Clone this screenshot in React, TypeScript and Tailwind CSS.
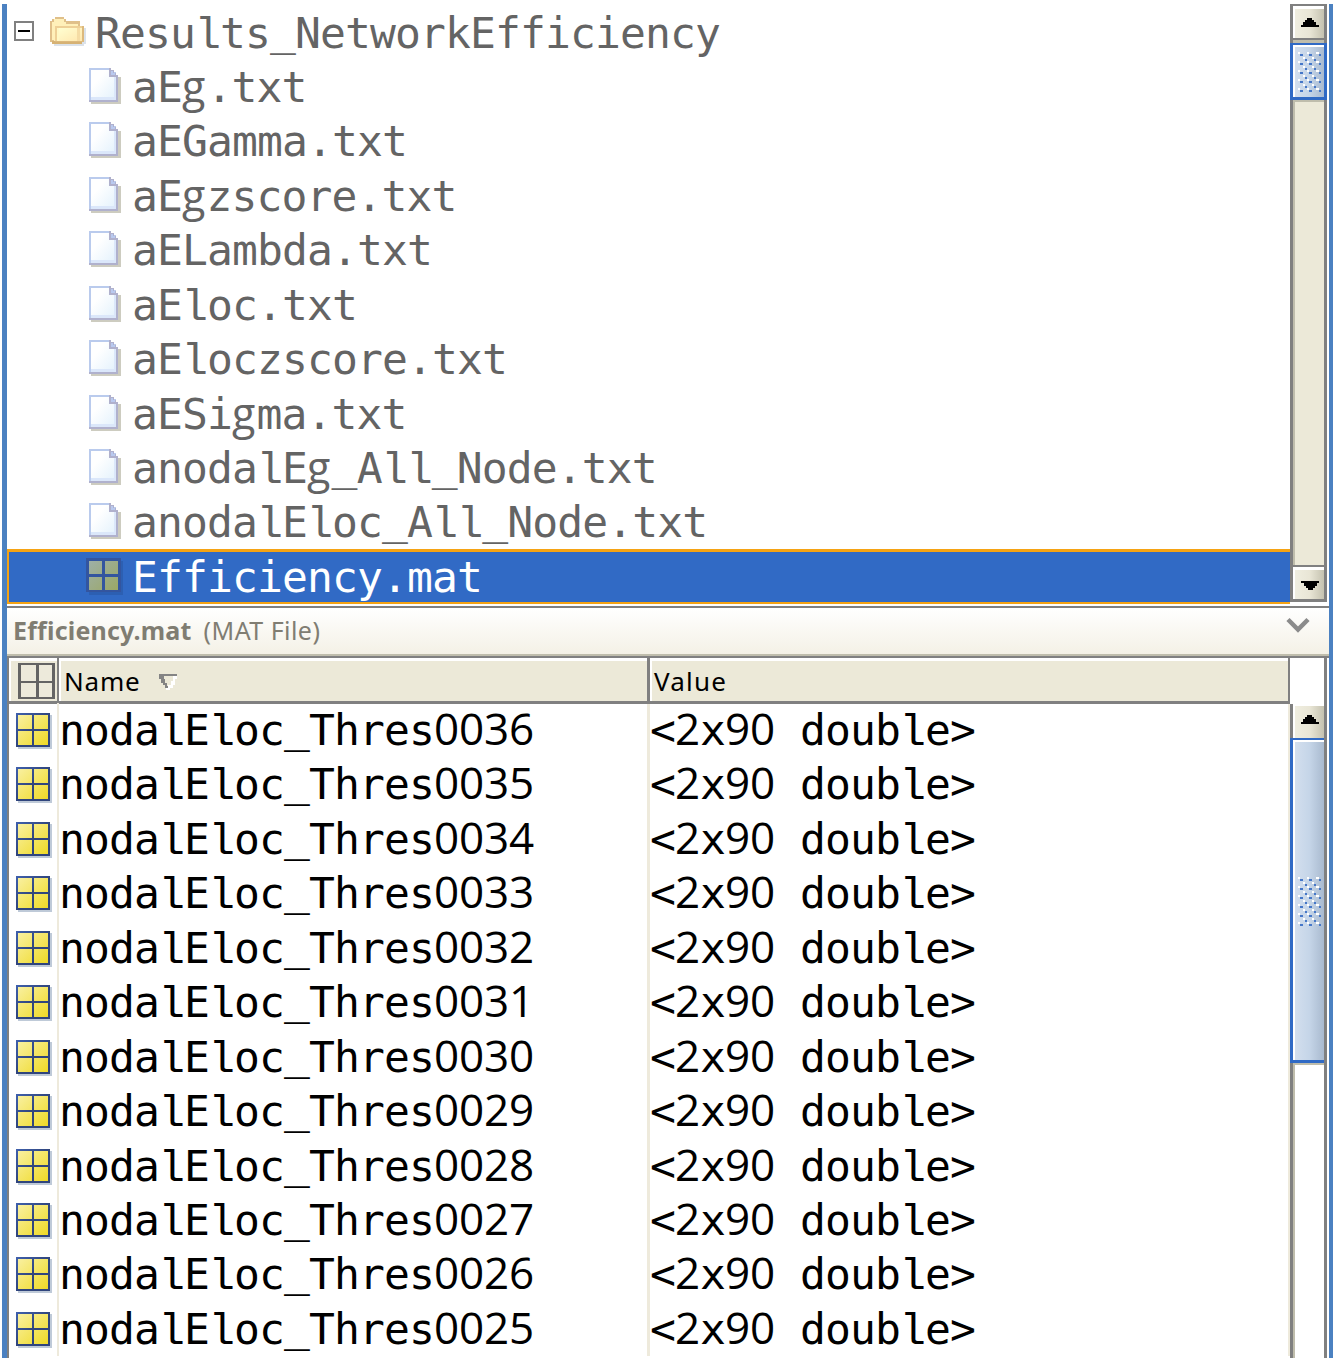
import React from "react";

const files = [
  "aEg.txt",
  "aEGamma.txt",
  "aEgzscore.txt",
  "aELambda.txt",
  "aEloc.txt",
  "aEloczscore.txt",
  "aESigma.txt",
  "anodalEg_All_Node.txt",
  "anodalEloc_All_Node.txt",
];

const variables = [36, 35, 34, 33, 32, 31, 30, 29, 28, 27, 26, 25].map(
  (n) => `nodalEloc_Thres00${n}`,
);

/* Monospaced label on a 25px pitch; some glyphs come from sibling faces. */
function Mono({ text }: { text: string }) {
  const runs = text.match(/[0-9]+|l|g|_|[^0-9lg_]+/g) ?? [];
  return (
    <span className="block h-full whitespace-pre font-['DejaVu_Sans_Mono',monospace] text-[43px] leading-[54px] tracking-[-0.888px]">
      {runs.map((run, i) => {
        if (/[0-9]/.test(run))
          return (
            <span key={i} className="font-['Open_Sans',sans-serif] text-[44px] font-medium leading-none tracking-[-0.16px]">
              {run}
            </span>
          );
        if (run === "g")
          return (
            <span key={i} className="font-['Open_Sans',sans-serif] text-[43px] font-medium leading-none tracking-[1.2px]">
              {run}
            </span>
          );
        if (run === "l")
          return (
            <span key={i} className="-ml-[0.5px] font-['Liberation_Mono',monospace] text-[44px] leading-none tracking-[-0.9px]">
              {run}
            </span>
          );
        if (run === "_")
          return (
            <span key={i} className="align-[3px] leading-none">
              {run}
            </span>
          );
        return <React.Fragment key={i}>{run}</React.Fragment>;
      })}
    </span>
  );
}

function FileIcon() {
  return (
    <svg width="33" height="37" viewBox="0 0 33 37" shapeRendering="crispEdges">
      <defs>
        <linearGradient id="paper" x1="0" y1="0" x2="1" y2="1">
          <stop offset="0.3" stopColor="#ffffff" />
          <stop offset="1" stopColor="#e2f1fc" />
        </linearGradient>
      </defs>
      <path d="M2 9H32V36H2z" fill="#cdccc0" />
      <path d="M0 0H22V4H27V9H29V34H0z" fill="#bacbed" />
      <path d="M20 0H22V2H25V5H27V7H29V34H0V32H27V9H20z" fill="#b0b1cd" />
      <path d="M2 2H20V9H27V32H2z" fill="url(#paper)" />
      <path d="M2 29H25V9H27V32H2z" fill="#dbe7fa" />
      <path d="M22 3H24V5H26V7H22z" fill="#b9c9ef" />
    </svg>
  );
}

function FolderIcon() {
  return (
    <svg width="36" height="29" viewBox="0 0 36 29" shapeRendering="crispEdges">
      <defs>
        <linearGradient id="folder" x1="0" y1="0" x2="1" y2="1">
          <stop offset="0" stopColor="#ffffd2" />
          <stop offset="1" stopColor="#ffe7ae" />
        </linearGradient>
      </defs>
      <path d="M4 11H36V27H34V29H4z" fill="#dbe2ea" />
      <path d="M0 4H2V2H5V0H14V2H16V4H30V9H34V25H32V27H2V25H0z" fill="#e0c08a" />
      <path d="M2 5H4V2H14V5H16V7H28V25H4V23H2z" fill="#fff0b9" />
      <path d="M2 24H34V25H32V27H2z" fill="#d6b274" />
      <path d="M5 9H34V25H5z" fill="#dcb97d" />
      <path d="M5 9H32V11H7V24H5z" fill="#eed096" />
      <path d="M7 11H32V24H7z" fill="url(#folder)" />
      <path d="M27 11H30V24H27z" fill="#f5dca4" />
      <path d="M7 11H9V24H7z" fill="#fff8c4" />
    </svg>
  );
}

function GridIcon() {
  return (
    <svg width="36" height="36" viewBox="0 0 36 36" shapeRendering="crispEdges">
      <defs>
        <linearGradient id="cell" x1="0" y1="0" x2="1" y2="1">
          <stop offset="0" stopColor="#f9f0a0" />
          <stop offset="1" stopColor="#efda27" />
        </linearGradient>
        <linearGradient id="frame" x1="0" y1="0" x2="1" y2="1">
          <stop offset="0" stopColor="#3f60ad" />
          <stop offset="0.5" stopColor="#30457d" />
        </linearGradient>
      </defs>
      <path d="M2 2H36V36H2z" fill="#bfcad8" />
      <path d="M0 0H34V34H0z" fill="url(#frame)" />
      <path d="M2 2H16V16H2zM18 2H32V16H18zM2 18H16V32H2zM18 18H32V32H18z" fill="url(#cell)" />
    </svg>
  );
}

function SelectedGridIcon() {
  return (
    <svg width="37" height="37" viewBox="0 0 37 37" shapeRendering="crispEdges">
      <defs>
        <linearGradient id="dimCell" x1="0" y1="0" x2="1" y2="1">
          <stop offset="0" stopColor="#9eb0a7" />
          <stop offset="1" stopColor="#9ba765" />
        </linearGradient>
      </defs>
      <path d="M3 3H37V37H3z" fill="#2c5fb2" />
      <path d="M0 0H35V34H0z" fill="#33559f" />
      <path d="M3 3H16V16H3zM19 3H32V16H19zM3 19H16V32H3zM19 19H32V32H19z" fill="url(#dimCell)" />
    </svg>
  );
}

function HeaderGridIcon() {
  return (
    <svg width="37" height="36" viewBox="0 0 37 36" shapeRendering="crispEdges">
      <path d="M0 0H37V36H0z" fill="#646464" />
      <path d="M3 2H18V18H3zM21 2H34V18H21zM3 20H18V34H3zM21 20H34V34H21z" fill="#edeadb" />
    </svg>
  );
}

function Arrow({ down = false }: { down?: boolean }) {
  return (
    <svg width="18" height="9" viewBox="0 0 18 9" shapeRendering="crispEdges" className={down ? "rotate-180" : ""}>
      <path d="M6 0H11V2H13V4H15V7H18V9H0V7H2V4H4V2H6z" fill="#000" />
    </svg>
  );
}

function Grip({ rows }: { rows: number }) {
  const h = rows * 9 - 5;
  return (
    <svg width="23" height={h} viewBox={`0 0 23 ${h}`} shapeRendering="crispEdges">
      {Array.from({ length: rows }, (_, r) => (
        <g key={r} transform={`translate(0 ${r * 9})`}>
          <path d="M0 0H2V2H0zM9 0H11V2H9zM18 0H21V2H18z" fill="#fff" />
          <path d="M2 2H5V4H2zM11 2H14V4H11zM21 2H23V4H21z" fill="#4577c8" />
          {r < rows - 1 && (
            <>
              <path d="M5 5H7V7H5zM14 5H16V7H14z" fill="#fff" />
              <path d="M7 7H9V9H7zM16 7H18V9H16z" fill="#4577c8" />
            </>
          )}
        </g>
      ))}
    </svg>
  );
}

const buttonFace =
  "flex items-center justify-center bg-linear-to-r from-[#f0eee0] via-[#e9e6d6] to-[#c5c2b0]";
const thumbFace =
  "flex items-center justify-center border-l-2 border-t-2 border-white bg-linear-to-r from-[#d3dfee] via-[#c5d5e8] to-[#a9bacf]";

function TreeScrollbar() {
  return (
    <div className="flex h-[598px] w-[37px] shrink-0 flex-col border-t-2 border-[#808080]">
      <div className="h-[34px] border-x-3 border-b-2 border-[#808080]">
        <div className={`${buttonFace} h-8 border-l-2 border-t-3 border-white pb-[3px]`}>
          <Arrow />
        </div>
      </div>
      <div className="h-[3px] border-x-3 border-[#808080] bg-[#bfbdac]" />
      <div className="h-[57px] border-x-3 border-t-2 border-b-3 border-[#306ac5]">
        <div className={`${thumbFace} h-[52px]`}>
          <Grip rows={5} />
        </div>
      </div>
      <div className="h-[465px] border-x-3 border-b-0 border-[#808080]">
        <div className="h-full border-l-2 border-t-2 border-[#bfbdac] bg-[#ece9d8]" />
      </div>
      <div className="h-[37px] border-x-3 border-b-3 border-t-2 border-[#808080]">
        <div className={`${buttonFace} h-8 border-l-2 border-t-3 border-white pt-[2px]`}>
          <Arrow down />
        </div>
      </div>
    </div>
  );
}

function TableScrollbar() {
  return (
    <div className="flex w-[37px] shrink-0 flex-col border-r-3 border-[#808080]">
      <div className="h-[46px]" />
      <div className="h-[34px] border-l-3 border-[#808080]">
        <div className={`${buttonFace} h-full border-l-2 border-t-2 border-white pb-[6px]`}>
          <Arrow />
        </div>
      </div>
      <div className="h-[325px] border-l-3 border-t-2 border-b-3 border-[#306ac5]">
        <div className={`${thumbFace} h-full`}>
          <Grip rows={6} />
        </div>
      </div>
      <div className="grow border-l-3 border-[#808080]">
        <div className="h-full border-l-2 border-t-2 border-[#bfbdac]" />
      </div>
    </div>
  );
}

export default function App() {
  return (
    <div className="h-[1360px] w-[1337px] overflow-hidden bg-white pl-[2px] pr-[4px] pt-1">
      <div className="flex h-[1354px] flex-col overflow-hidden border-l-5 border-r-4 border-[#4b81c1]">
        <div className="flex h-[602px] shrink-0">
          <div className="w-[1283px] pt-[0.5px] text-[#646464]">
            <div className="flex h-[54.45px]">
              <div className="mt-4 ml-[7px] flex size-5 items-center justify-center border-2 border-[#808080]">
                <div className="h-0.5 w-3 bg-black" />
              </div>
              <div className="mt-3 ml-4 w-[45px]">
                <FolderIcon />
              </div>
              <div className="pt-px">
                <Mono text="Results_NetworkEfficiency" />
              </div>
            </div>
            {files.map((name) => (
              <div key={name} className="flex h-[54.45px]">
                <div className="mt-[9px] ml-[82px] w-[43px]">
                  <FileIcon />
                </div>
                <div className="pt-px">
                  <Mono text={name} />
                </div>
              </div>
            ))}
            <div className="flex h-[55px] border-y-2 border-l-2 border-t-3 border-[#f5a314] bg-[#316ac5] text-white">
              <div className="mt-[6px] ml-[77px] w-[46px]">
                <SelectedGridIcon />
              </div>
              <div className="-mt-[2px]">
                <Mono text="Efficiency.mat" />
              </div>
            </div>
          </div>
          <TreeScrollbar />
        </div>

        <div className="flex h-[50px] shrink-0 justify-between border-t-2 border-b-2 border-t-[#808080] border-b-[#bfbdac] bg-linear-to-b from-white to-[#f4f1e6] pl-[6px] text-[#807d72]">
          <div className="whitespace-pre font-['Noto_Sans',sans-serif] text-[25px] leading-[45px]">
            <span className="font-bold tracking-[0.2px]">Efficiency.mat</span>
            <span className="ml-[12px] tracking-[0.45px]">(MAT File)</span>
          </div>
          <svg width="26" height="18" viewBox="0 0 26 18" className="mt-[8px] mr-[18px]">
            <path d="M3 3.5L13 13.5L23 3.5" fill="none" stroke="#8b8b8b" strokeWidth="4.5" />
          </svg>
        </div>

        <div className="flex min-h-0 grow border-t-2 border-l-2 border-[#808080]">
          <div className="w-[1281px] shrink-0">
            <div className="flex h-[46px] font-['Noto_Sans',sans-serif] text-[26px] leading-[41px] text-black">
              <div className="flex w-[50px] border-b-3 border-r-2 border-[#808080]">
                <div className="grow border-l-2 border-t-3 border-white bg-[#ece9d8] pt-[2px] pl-[7px]">
                  <HeaderGridIcon />
                </div>
              </div>
              <div className="flex w-[591px] border-b-3 border-r-3 border-[#808080]">
                <div className="flex grow border-l-2 border-t-3 border-white bg-[#ece9d8] pl-[3px]">
                  <span className="w-[95px] tracking-[0.8px]">Name</span>
                  <svg width="18" height="16" viewBox="0 0 18 16" className="mt-[13px]" shapeRendering="crispEdges">
                    <path d="M14 2H18V5H16V11H14V14H11V16H7V14H9V11H12V7H14z" fill="#fff" />
                    <path d="M0 0H18V2H5V5H6V9H8V12H9V14H6V11H4V9H2V5H0z" fill="#848484" />
                  </svg>
                </div>
              </div>
              <div className="flex w-[640px] border-b-3 border-r-2 border-[#808080]">
                <div className="grow border-l-2 border-t-3 border-white bg-[#ece9d8] pl-[2px] tracking-[1.2px]">Value</div>
              </div>
            </div>
            <div className="flex text-black">
              <div className="-mt-px w-[50px] border-r-2 border-[#eeeadc] pl-[7px]">
                {variables.map((name) => (
                  <div key={name} className="h-[54.45px] pt-[10px]">
                    <GridIcon />
                  </div>
                ))}
              </div>
              <div className="w-[591px] border-r-3 border-[#eeeadc]">
                <div className="-mt-px">
                  {variables.map((name) => (
                    <div key={name} className="h-[54.45px]">
                      <Mono text={name} />
                    </div>
                  ))}
                </div>
              </div>
              <div className="w-[640px] border-r-2 border-[#eeeadc]">
                <div className="-mt-px">
                  {variables.map((name) => (
                    <div key={name} className="h-[54.45px]">
                      <Mono text="<2x90 double>" />
                    </div>
                  ))}
                </div>
              </div>
            </div>
          </div>
          <TableScrollbar />
        </div>
      </div>
    </div>
  );
}
